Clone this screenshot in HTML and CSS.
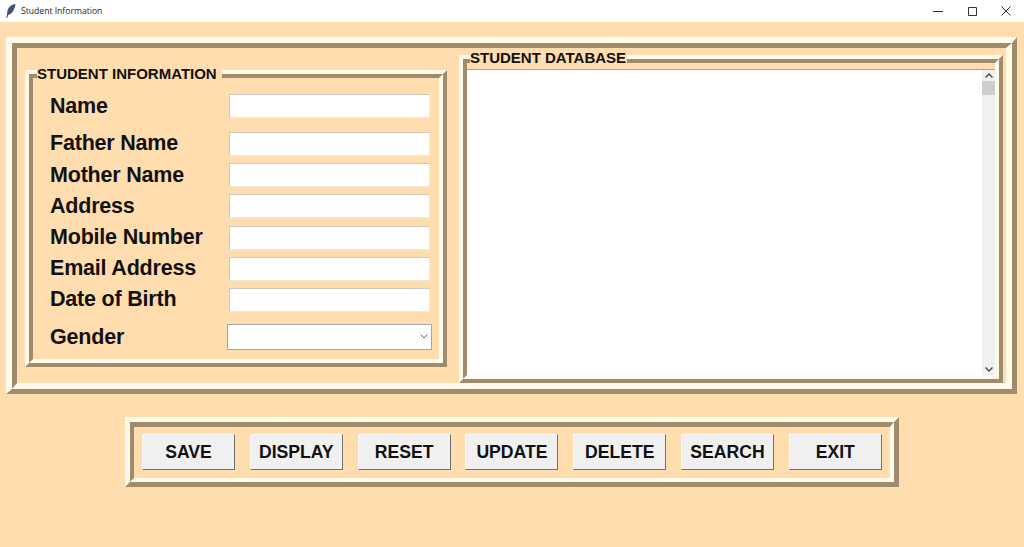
FILE: index.html
```html
<!DOCTYPE html>
<html lang="en">
<head>
  <meta charset="UTF-8">
  <title>Student Information</title>
  <link rel="stylesheet" href="styles.css">
</head>
<body>
  <header class="titlebar">
    <svg class="feather" width="10" height="14" viewBox="0 0 10 14"><path d="M9.500 0C5 .5 2 3.500 1.300 7.500L1 10.500L.3 14L1.200 14L2.200 11C5.800 10 8.800 6 9.500 0Z" fill="#3f5573"/></svg>
    <span class="title">Student Information</span>
    <div class="win_btns">
      <svg width="10" height="10" viewBox="0 0 10 10"><path d="M0 5.500H10" stroke="#333" fill="none"/></svg>
      <svg width="10" height="10" viewBox="0 0 10 10"><path d="M1.500 1.500H9.500V9.500H1.500Z" stroke="#333" fill="none"/></svg>
      <svg width="10" height="10" viewBox="0 0 10 10"><path d="M.5 .5L9.500 9.500M9.500 .5L.5 9.500" stroke="#333" fill="none"/></svg>
    </div>
  </header>

  <main class="main">
    <div class="ridge ridge_main">
      <div class="ridge_in top_in">

        <section class="ridge ridge_info">
          <div class="ridge_in info_in">
            <div class="row row_first"><label class="lbl">Name</label><input class="entry" type="text"></div>
            <div class="row"><label class="lbl">Father Name</label><input class="entry" type="text"></div>
            <div class="row"><label class="lbl">Mother Name</label><input class="entry" type="text"></div>
            <div class="row"><label class="lbl">Address</label><input class="entry" type="text"></div>
            <div class="row"><label class="lbl">Mobile Number</label><input class="entry" type="text"></div>
            <div class="row"><label class="lbl">Email Address</label><input class="entry" type="text"></div>
            <div class="row"><label class="lbl">Date of Birth</label><input class="entry" type="text"></div>
            <div class="row row_gender">
              <label class="lbl lbl_gender">Gender</label>
              <div class="combo">
                <svg width="8" height="5" viewBox="0 0 8 5"><path d="M.5 .5L4 4L7.500 .5" stroke="#666" fill="none"/></svg>
              </div>
            </div>
          </div>
          <span class="legend legend_info">STUDENT INFORMATION</span>
        </section>

        <section class="ridge ridge_db">
          <div class="ridge_in db_in">
            <div class="db_box">
              <div class="db_text"></div>
              <div class="scrollbar">
                <svg width="8" height="5" viewBox="0 0 8 5"><path d="M.5 4.500L4 1L7.500 4.500" stroke="#505050" stroke-width="1.500" fill="none"/></svg>
                <div class="thumb"></div>
                <svg class="arrow_down" width="8" height="5" viewBox="0 0 8 5"><path d="M.5 .5L4 4L7.500 .5" stroke="#505050" stroke-width="1.500" fill="none"/></svg>
              </div>
            </div>
          </div>
          <span class="legend legend_db">STUDENT DATABASE</span>
        </section>

      </div>
    </div>

    <div class="ridge ridge_btns">
      <div class="ridge_in btns_in">
        <button class="btn">SAVE</button>
        <button class="btn">DISPLAY</button>
        <button class="btn">RESET</button>
        <button class="btn">UPDATE</button>
        <button class="btn">DELETE</button>
        <button class="btn">SEARCH</button>
        <button class="btn">EXIT</button>
      </div>
    </div>
  </main>
</body>
</html>
```

FILE: styles.css
```css
*,*:before,*:after{
  box-sizing: border-box;
  margin: 0;
  padding: 0;
}

html,body{
  height: 100%;
}
body{
  display: flex;
  flex-direction: column;
  overflow: hidden;
  background: #FFDDAF;
  color: #111;
  font-family: "Liberation Sans", Arial, sans-serif;
}

/* title bar */
.titlebar{
  display: flex;
  align-items: center;
  height: 22px;
  padding-left: 6px;
  background: #fff;
}
.feather{
  margin-right: 5px;
}
.title{
  font-family: "Open Sans", sans-serif;
  font-size: 8.600px;
  color: #222;
}
.win_btns{
  display: flex;
  gap: 24px;
  margin-left: auto;
  padding-right: 13px;
}

/* tk style ridge: two nested borders, corners mitre by themselves */
.ridge{
  position: relative;
  border-style: solid;
  border-color: #FFFBEA #A08B6D #A08B6D #FFFBEA;
}
.ridge_in{
  height: 100%;
  border-style: solid;
  border-color: #A08B6D #FFFBEA #FFFBEA #A08B6D;
}

.main{
  flex: 1;
  padding: 15px 7px 0 6px;
}
.ridge_main{
  height: 357px;
  border-width: 6px 5px 5px 6px;
}
.ridge_main > .ridge_in{
  border-width: 5px 6px 6px 5px;
}
.top_in{
  display: flex;
  align-items: flex-start;
  gap: 12px;
  padding: 7px 2px 0 8px;
}

/* student information */
.ridge_info{
  flex: 0 0 422px;
  height: 297px;
  margin-top: 15px;
  border-width: 4px;
}
.ridge_info > .ridge_in{
  border-width: 4px;
}
.info_in{
  display: flex;
  flex-direction: column;
  gap: 7.2px;
  padding: 16px 0 0 17px;
}
.row{
  display: flex;
  align-items: center;
  height: 24px;
}
.row_first{
  margin-bottom: 6.8px;
}
.lbl{
  flex: 0 0 179px;
  font-size: 21.500px;
  font-weight: bold;
  letter-spacing: -0.2px;
}
.lbl_gender{
  flex-basis: 177px;
  padding-top: 1px;
}
.entry{
  width: 201px;
  height: 24px;
  border: 1px solid;
  border-color: #cfc8bc #efe9dd #efe9dd #cfc8bc;
  background: #fff;
}
.row_gender{
  height: 26px;
  margin-top: 4.800px;
}
.combo{
  display: flex;
  align-items: center;
  justify-content: flex-end;
  width: 205px;
  height: 26px;
  padding-right: 3px;
  border: 1px solid #a5a5a5;
  background: #fff;
}

/* legends sit on top of the frame line */
.legend{
  position: absolute;
  padding-right: 5px;
  background: #FFDDAF;
  font-size: 15px;
  font-weight: bold;
  line-height: 17px;
  white-space: nowrap;
}
.legend_info{
  left: 8px;
  top: -9px;
}
.legend_db{
  left: 7px;
  top: -10px;
  padding-right: 1px;
}

/* student database */
.ridge_db{
  flex: 0 0 544px;
  height: 328px;
  border-width: 4px;
}
.ridge_db > .ridge_in{
  border-width: 4px;
}
.db_in{
  padding-top: 6px;
}
.db_box{
  display: flex;
  height: 100%;
  border-top: 1px solid #aaa49a;
  background: #fff;
}
.db_text{
  flex: 1;
}
.scrollbar{
  display: flex;
  flex-direction: column;
  align-items: center;
  flex: 0 0 13px;
  padding-top: 3px;
  background: #f0f0f0;
}
.thumb{
  width: 100%;
  height: 14px;
  margin-top: 3px;
  background: #cdcdcd;
}
.arrow_down{
  margin-top: auto;
  margin-bottom: 3px;
}

/* bottom buttons */
.ridge_btns{
  width: 774px;
  height: 70px;
  margin: 23px 0 0 119px;
  border-width: 5px;
}
.ridge_btns > .ridge_in{
  border-width: 5px 4px 4px 4px;
}
.btns_in{
  display: flex;
  gap: 14.800px;
  padding: 7px 0 0 8px;
}
.btn{
  width: 93px;
  height: 36px;
  padding-top: 1px;
  border: 1px solid;
  border-color: #fafafa #707070 #707070 #fafafa;
  background: #F0F0F0;
  color: #111;
  font-family: inherit;
  font-size: 17.600px;
  font-weight: bold;
}
```
